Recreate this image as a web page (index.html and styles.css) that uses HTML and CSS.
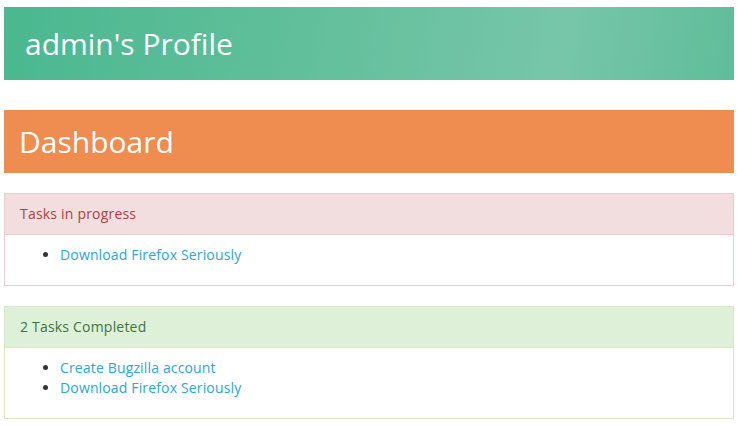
FILE: index.html
```html
<!DOCTYPE html>
<html>
<head>
<meta charset="utf-8">
<link rel="stylesheet" href="styles.css">
</head>
<body>
<div class="page">
  <div class="profile-banner"><h1>admin's Profile</h1></div>
  <div class="dash-banner"><h2>Dashboard</h2></div>
  <div class="panel panel-danger">
    <div class="panel-heading">Tasks in progress</div>
    <div class="panel-body">
      <ul>
        <li><a href="#">Download Firefox Seriously</a></li>
      </ul>
    </div>
  </div>
  <div class="panel panel-success">
    <div class="panel-heading">2 Tasks Completed</div>
    <div class="panel-body">
      <ul>
        <li><a href="#">Create Bugzilla account</a></li>
        <li><a href="#">Download Firefox Seriously</a></li>
      </ul>
    </div>
  </div>
</div>
</body>
</html>
```

FILE: styles.css
```css
* { box-sizing: border-box; }
html, body { margin: 0; padding: 0; background: #fff; }
body {
  font-family: "Open Sans", "Liberation Sans", sans-serif;
  font-size: 14px;
  line-height: 20px;
  color: #333;
}
.page { padding: 7px 4px 0 4px; }
.profile-banner {
  background: linear-gradient(100deg, #4ab890 0%, #62bf9c 42%, #77c6a9 76%, #5fbd9a 100%);
  padding: 20px 21px;
  margin-bottom: 30px;
}
.profile-banner h1, .dash-banner h2 {
  margin: 0;
  font-size: 30px;
  line-height: 33px;
  font-weight: 400;
  color: #fff;
}
.dash-banner {
  background: #ef8c50;
  padding: 15px 15px;
  margin-bottom: 20px;
}
.panel {
  border: 1px solid;
  margin-bottom: 20px;
  background: #fff;
}
.panel-heading {
  padding: 10px 15px;
  border-bottom: 1px solid;
  letter-spacing: 0.2px;
}
.panel-body { padding: 10px 15px; }
.panel-body ul { margin: 0 0 10px; padding-left: 40px; letter-spacing: 0.15px; }
.panel-body a { color: #2ba6de; text-decoration: none; }
.panel-danger { border-color: #ebccd1; }
.panel-danger .panel-heading { background: #f2dede; color: #a94442; border-color: #ebccd1; }
.panel-success { border-color: #d6e9c6; }
.panel-success .panel-heading { background: #dff0d8; color: #3c763d; border-color: #d6e9c6; }
```
